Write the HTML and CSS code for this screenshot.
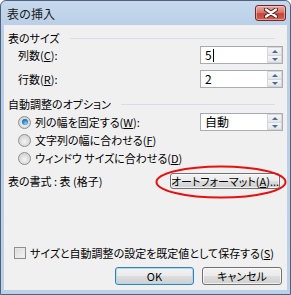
FILE: index.html
```html
<!DOCTYPE html>
<html lang="ja">

<head>
    <meta charset="UTF-8">
    <title>表の挿入</title>
    <link rel="stylesheet" href="styles.css">
</head>

<body>
    <div class="window">
        <!-- Title Bar -->
        <div class="titlebar">
            <span class="title">表の挿入</span>
            <div class="close">
                <svg width="14" height="10" viewBox="0 0 14 10">
                    <path d="M2 1.5 L12 8.5 M12 1.5 L2 8.5" stroke="#4b2020" stroke-width="4.2" stroke-linecap="round"/>
                    <path d="M2 1.5 L12 8.5 M12 1.5 L2 8.5" stroke="#ffffff" stroke-width="2.2" stroke-linecap="round"/>
                </svg>
            </div>
        </div>

        <!-- Dialog Body -->
        <div class="client">
            <div class="group-head head-size"><span>表のサイズ</span></div>

            <div class="row row-first">
                <span class="label">列数(<u>C</u>):</span>
                <div class="spin">
                    <span class="value">5<i class="caret"></i></span>
                    <span class="arrows"><span class="up"></span><span class="down"></span></span>
                </div>
            </div>

            <div class="row row-second">
                <span class="label">行数(<u>R</u>):</span>
                <div class="spin">
                    <span class="value">2</span>
                    <span class="arrows"><span class="up"></span><span class="down"></span></span>
                </div>
            </div>

            <div class="group-head head-auto"><span>自動調整のオプション</span></div>

            <div class="radio-row radio-first">
                <span class="radio checked"></span>
                <span class="label">列の幅を固定する(<u>W</u>):</span>
                <div class="spin">
                    <span class="value">自動</span>
                    <span class="arrows"><span class="up"></span><span class="down"></span></span>
                </div>
            </div>
            <div class="radio-row">
                <span class="radio"></span>
                <span class="label">文字列の幅に合わせる(<u>F</u>)</span>
            </div>
            <div class="radio-row">
                <span class="radio"></span>
                <span class="label">ウィンドウ サイズに合わせる(<u>D</u>)</span>
            </div>

            <div class="format-row">
                <span class="label">表の書式 : 表 (格子)</span>
                <div class="btn btn-format">オートフォーマット(<u>A</u>)...</div>
                <svg class="mark" width="134" height="36" viewBox="0 0 134 36">
                    <ellipse cx="67" cy="18" rx="64.5" ry="15.5" fill="none" stroke="#e8100e" stroke-width="2"/>
                </svg>
            </div>

            <div class="check-row">
                <span class="checkbox"></span>
                <span class="label">サイズと自動調整の設定を既定値として保存する(<u>S</u>)</span>
            </div>

            <div class="button-row">
                <div class="btn btn-ok">OK</div>
                <div class="btn btn-cancel">キャンセル</div>
            </div>
        </div>
    </div>
</body>

</html>
```

FILE: styles.css
```css
/* General Styling */
body {
    margin: 0;
    padding: 0;
    font-family: "Noto Sans CJK JP", "Noto Sans", sans-serif;
    font-size: 11px;
    color: #000;
    background: #fff;
}

u {
    text-decoration: underline;
    text-underline-offset: 1px;
}

.label {
    font-feature-settings: "palt";
    white-space: nowrap;
}

/* Window Frame */
.window {
    width: 291px;
    height: 295px;
    box-sizing: border-box;
    border: 1px solid #4f6279;
    border-radius: 6px 6px 0 0;
    padding: 0 3px 4px;
    background: linear-gradient(#c5d8ed, #b8cee6 30px, #bcd1e8);
    display: flex;
    flex-direction: column;
    position: relative;
}

/* Title Bar */
.titlebar {
    height: 24px;
    display: flex;
    align-items: flex-start;
    justify-content: space-between;
}

.title {
    font-size: 12px;
    line-height: 14px;
    margin: 6px 0 0 3px;
    color: #1a1a1a;
}

.close {
    width: 31px;
    height: 16px;
    box-sizing: border-box;
    margin: 4px 1px 0 0;
    border: 1px solid #6a2a2a;
    border-radius: 3px;
    background: linear-gradient(#e8aaa2, #d9766b 45%, #c4453a 55%, #d2604f);
    display: flex;
    align-items: center;
    justify-content: center;
    box-shadow: inset 0 0 0 1px rgba(255, 220, 210, 0.5);
}

.close svg {
    display: block;
}

/* Client Area */
.client {
    flex: 1;
    background: #f0f0f0;
    padding: 0 4px 5px;
    display: flex;
    flex-direction: column;
    position: relative;
}

/* Group Headings */
.group-head {
    height: 14px;
    line-height: 14px;
    display: flex;
    align-items: center;
    margin-right: 8px;
    font-feature-settings: "palt";
}

.group-head::after {
    content: "";
    flex: 1;
    margin-left: 10px;
    border-top: 1px solid #d5dfe5;
}

.head-size {
    margin-top: 6px;
}

.head-auto {
    margin-top: 9px;
}

/* Spin Rows */
.row {
    height: 18px;
    display: flex;
    align-items: center;
    justify-content: space-between;
    padding-left: 10px;
}

.row-first {
    margin-top: 1px;
}

.row-second {
    margin-top: 6px;
}

.spin {
    width: 83px;
    height: 18px;
    box-sizing: border-box;
    border: 1px solid #abadb3;
    border-top-color: #a5a9b0;
    background: #fff;
    display: flex;
    align-items: center;
    justify-content: space-between;
}

.value {
    padding-left: 4px;
    font-size: 12px;
    line-height: 14px;
    display: flex;
    align-items: center;
}

.caret {
    display: inline-block;
    width: 1px;
    height: 13px;
    background: #000;
    margin-left: 1px;
}

.arrows {
    width: 15px;
    height: 16px;
    display: flex;
    flex-direction: column;
}

.arrows .up,
.arrows .down {
    flex: 1;
    box-sizing: border-box;
    border: 1px solid #d3d6db;
    background: linear-gradient(#f6f6f6, #e4e5e7);
    position: relative;
}

.arrows .down {
    border-top: none;
}

.arrows .up::after,
.arrows .down::after {
    content: "";
    position: absolute;
    left: 4px;
    border-left: 3px solid transparent;
    border-right: 3px solid transparent;
}

.arrows .up::after {
    top: 2px;
    border-bottom: 3px solid #4d6a9a;
}

.arrows .down::after {
    top: 2px;
    border-top: 3px solid #4d6a9a;
}

/* Radio Rows */
.radio-row {
    height: 18px;
    display: flex;
    align-items: center;
    padding-left: 10px;
}

.radio-first {
    margin-top: 2px;
}

.radio-first .spin {
    margin-left: auto;
}

.radio {
    width: 13px;
    height: 13px;
    box-sizing: border-box;
    border-radius: 50%;
    border: 1px solid #8e8f8f;
    background: radial-gradient(circle at 50% 60%, #f4f4f4 0, #d8d8d8 60%, #cfcfcf 100%);
    margin-right: 4px;
    position: relative;
    flex: none;
}

.radio.checked::after {
    content: "";
    position: absolute;
    left: 2.5px;
    top: 2.5px;
    width: 6px;
    height: 6px;
    border-radius: 50%;
    background: radial-gradient(circle at 60% 70%, #8fd2fa 0, #2a8ad4 45%, #124e8c 100%);
}

/* Table Format Row */
.format-row {
    height: 16px;
    margin-top: 6px;
    display: flex;
    align-items: center;
    justify-content: space-between;
    padding-right: 3px;
    position: relative;
}

.btn {
    height: 100%;
    box-sizing: border-box;
    border: 1px solid #707070;
    border-radius: 3px;
    background: linear-gradient(#f2f2f2, #ebebeb 48%, #dddddd 52%, #cfcfcf);
    box-shadow: inset 0 0 0 1px rgba(255, 255, 255, 0.7);
    display: flex;
    align-items: center;
    justify-content: center;
    font-feature-settings: "palt";
    white-space: nowrap;
}

.btn-format {
    width: 110px;
}

.mark {
    position: absolute;
    right: -5px;
    top: -9px;
}

/* Checkbox Row */
.check-row {
    height: 14px;
    margin-top: auto;
    display: flex;
    align-items: center;
    padding-left: 6px;
}

.checkbox {
    width: 12px;
    height: 12px;
    box-sizing: border-box;
    border: 1px solid #8e8f8f;
    background: linear-gradient(135deg, #d9d9d9, #f6f6f6);
    box-shadow: inset 0 0 0 1px #e8e8e8;
    margin-right: 4px;
    flex: none;
}

/* Dialog Buttons */
.button-row {
    height: 18px;
    margin-top: 7px;
    display: flex;
    justify-content: flex-end;
    gap: 8px;
    padding-right: 1px;
}

.btn-ok {
    width: 79px;
    border-color: #3c7fb1;
    box-shadow: inset 0 0 0 1px #a8dcf8;
}

.btn-cancel {
    width: 80px;
}
```
